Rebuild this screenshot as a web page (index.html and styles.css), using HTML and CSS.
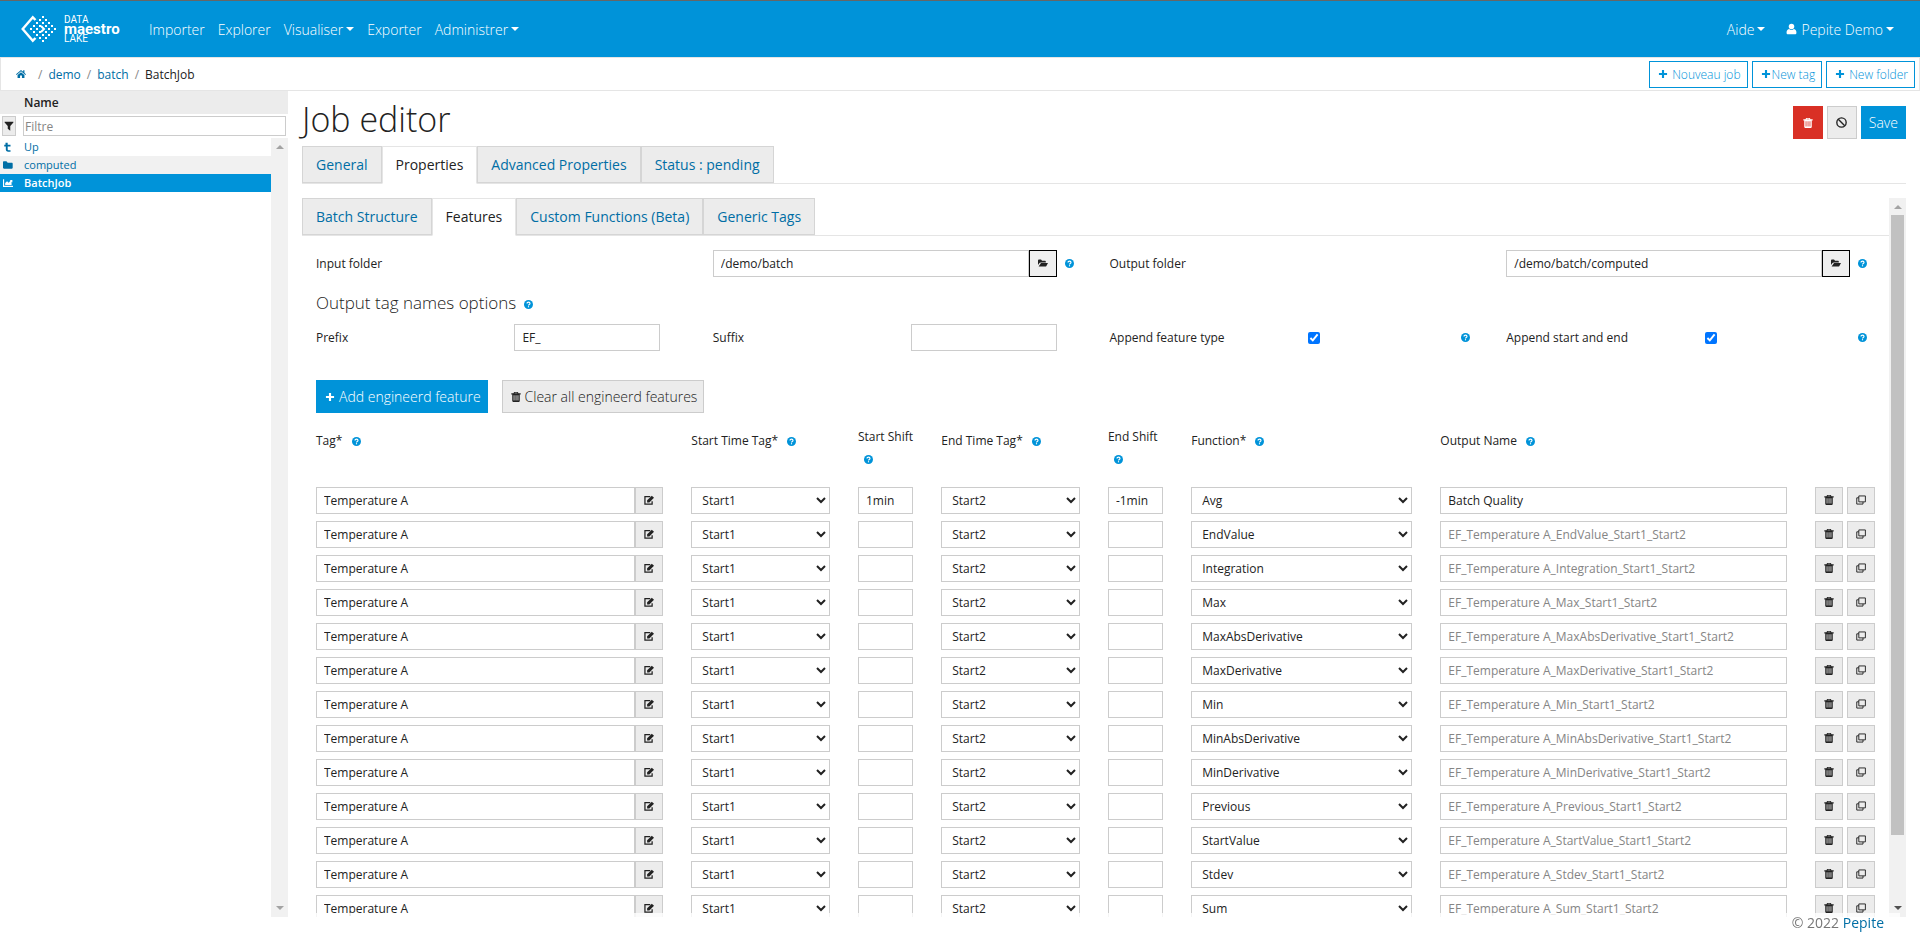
FILE: index.html
```html
<!DOCTYPE html>
<html lang="fr">
<head>
  <meta charset="UTF-8">
  <meta name="viewport" content="width=device-width, initial-scale=1.0">
  <title>Job editor</title>
  <link rel="stylesheet" href="styles.css">
</head>
<body>
  <!-- Icon set -->
  <svg class="icon-set" aria-hidden="true">
    <symbol id="i-help" viewBox="0 0 16 16"><circle cx="8" cy="8" r="8"/><path d="M5.4 6.2C5.4 4.6 6.500 3.800 8 3.800s2.700.9 2.700 2.300C10.700 7.900 8 7.900 8 9.700" fill="none" stroke="#fff" stroke-width="2"/><rect x="7" y="11" width="2" height="2" fill="#fff"/></symbol>
    <symbol id="i-home" viewBox="0 0 16 16"><path d="M8 1.500 0 8.400l1 1.200 7-6 7 6 1-1.200-2.500-2.200V2h-2v2.500zM8 5 2.500 9.700V14.500h4v-4h3v4h4V9.700z"/></symbol>
    <symbol id="i-plus" viewBox="0 0 16 16"><path d="M6.300 1.500h3.400v4.800h4.800v3.400H9.700v4.800H6.300V9.700H1.500V6.300h4.800z"/></symbol>
    <symbol id="i-user" viewBox="0 0 16 16"><circle cx="8" cy="4.500" r="4"/><path d="M4.500 8C2 8.500.8 10.500.8 13.300c0 1.500 1 2.200 2.200 2.200h10c1.200 0 2.200-.7 2.200-2.200 0-2.800-1.200-4.800-3.700-5.300-2 1.700-5 1.700-7 0z"/></symbol>
    <symbol id="i-filter" viewBox="0 0 16 16"><path d="M1 1h14v1.500L10 8v7.500L6 12.500V8L1 2.500z"/></symbol>
    <symbol id="i-up" viewBox="0 0 16 16"><path d="M4 1h3.500v3.500H12V7H7.500v4.500c0 1.300.8 1.600 1.800 1.600H12V15.500H8.500C5.500 15.500 4.500 14 4.500 12V7H2V4.500h2z"/></symbol>
    <symbol id="i-folder" viewBox="0 0 16 16"><path d="M0 3.500C0 2.700.7 2 1.500 2h4L7.500 4.500H14c.8 0 1.500.7 1.500 1.500v6.500c0 .8-.7 1.500-1.500 1.500H1.500C.7 14 0 13.300 0 12.500z"/></symbol>
    <symbol id="i-open" viewBox="0 0 16 16"><path d="M0 11V4c0-.8.6-1.500 1.400-1.500h3.400L6.500 4.500H11c.8 0 1.500.6 1.500 1.400V7H4.500C3.300 7 2.600 7.400 2 8.200zM4.800 8H16l-2.600 4.700c-.3.600-.8.800-1.400.8H1z"/></symbol>
    <symbol id="i-chart" viewBox="0 0 16 16"><path d="M0 2h1.800v10.500H16v1.800H0zM3.500 11.200V8l3-3 2.500 2.500 3-3L10.800 3H15v4.300l-1.300-1.200V11.200z"/></symbol>
    <symbol id="i-trash" viewBox="0 0 16 16"><path fill-rule="evenodd" d="M5 0h6l1 2h3.500v2H14v10.500c0 .8-.6 1.500-1.500 1.500h-9C2.600 16 2 15.300 2 14.500V4H.5V2H4zM6 1.300 5.700 2h4.600L10 1.300zM4.200 5v8.700h1.300V5zM7.400 5v8.700h1.300V5zM10.500 5v8.700h1.300V5z"/></symbol>
    <symbol id="i-ban" viewBox="0 0 16 16"><g fill="none" stroke="currentColor" stroke-width="2"><circle cx="8" cy="8" r="6.800"/><path d="m3.300 3.300 9.400 9.400"/></g></symbol>
    <symbol id="i-edit" viewBox="0 0 16 16"><path d="M10 2.500H1.500v12h11.500V10" fill="none" stroke="currentColor" stroke-width="2"/><path d="M5 12V8.500L12.500 1 16 4.500 8.500 12z"/></symbol>
    <symbol id="i-copy" viewBox="0 0 16 16"><g fill="none" stroke="currentColor" stroke-width="1.500"><path d="M4.500 1.500h10.500v9.500H4.500z"/><path d="M4.500 4.500H1.200v10h10V11"/></g></symbol>
  </svg>

  <!-- Main navigation -->
  <header class="navbar">
    <a class="brand" href="#" aria-label="Data maestro lake">
      <svg class="brand-mark" viewBox="0 0 40 28" aria-hidden="true">
        <path d="M14.500 5 11.800 2.300 1.700 14 11.800 25.700 14.500 23" fill="none" stroke="#fff" stroke-width="2.400"/>
        <path d="m20 11 3 3-3 3" fill="none" stroke="#fff" stroke-width="2"/>
        <g id="brandDots" fill="#fff"></g>
      </svg>
      <span class="brand-text">
        <span>DATA</span>
        <strong>maestro</strong>
        <span>LAKE</span>
      </span>
    </a>
    <nav class="nav">
      <a href="#">Importer</a>
      <a href="#">Explorer</a>
      <a href="#" class="dropdown">Visualiser</a>
      <a href="#">Exporter</a>
      <a href="#" class="dropdown">Administrer</a>
    </nav>
    <nav class="nav nav-right">
      <a href="#" class="dropdown">Aide</a>
      <a href="#" class="dropdown"><svg class="icon"><use href="#i-user"/></svg>Pepite Demo</a>
    </nav>
  </header>

  <!-- Breadcrumb and creation buttons -->
  <div class="toolbar">
    <nav class="breadcrumb" aria-label="Breadcrumb">
      <a href="#" aria-label="Home"><svg class="icon"><use href="#i-home"/></svg></a>
      <a href="#">demo</a>
      <a href="#">batch</a>
      <span>BatchJob</span>
    </nav>
    <div class="toolbar-actions">
      <button type="button" class="btn-outline"><svg class="icon"><use href="#i-plus"/></svg>Nouveau job</button>
      <button type="button" class="btn-outline btn-tight"><svg class="icon"><use href="#i-plus"/></svg>New tag</button>
      <button type="button" class="btn-outline"><svg class="icon"><use href="#i-plus"/></svg>New folder</button>
    </div>
  </div>

  <div class="page">
    <!-- Folder explorer -->
    <aside class="sidebar">
      <div class="sidebar-title">Name</div>
      <div class="sidebar-filter">
        <button type="button" aria-label="Filter"><svg class="icon"><use href="#i-filter"/></svg></button>
        <input type="text" placeholder="Filtre" aria-label="Filtre">
      </div>
      <div class="sidebar-body">
        <ul class="tree">
          <li><a href="#"><svg class="icon"><use href="#i-up"/></svg>Up</a></li>
          <li><a href="#"><svg class="icon"><use href="#i-folder"/></svg>computed</a></li>
          <li class="selected"><a href="#"><svg class="icon"><use href="#i-chart"/></svg>BatchJob</a></li>
        </ul>
        <div class="scrollbar disabled" aria-hidden="true"><i class="arrow-up"></i><i class="arrow-down"></i></div>
      </div>
    </aside>

    <!-- Job editor -->
    <main class="editor">
      <div class="editor-head">
        <h1>Job editor</h1>
        <div class="editor-actions">
          <button type="button" class="btn btn-danger" aria-label="Delete"><svg class="icon"><use href="#i-trash"/></svg></button>
          <button type="button" class="btn btn-light btn-icon" aria-label="Disable"><svg class="icon"><use href="#i-ban"/></svg></button>
          <button type="button" class="btn btn-primary btn-save">Save</button>
        </div>
      </div>
      <nav class="tabs">
        <a href="#">General</a>
        <a href="#" class="active">Properties</a>
        <a href="#">Advanced Properties</a>
        <a href="#">Status : pending</a>
      </nav>

      <div class="editor-body">
        <div class="editor-scroll">
          <nav class="tabs">
            <a href="#">Batch Structure</a>
            <a href="#" class="active">Features</a>
            <a href="#">Custom Functions (Beta)</a>
            <a href="#">Generic Tags</a>
          </nav>

          <div class="form-row folders">
            <label for="inputFolder">Input folder</label>
            <div class="field">
              <input type="text" id="inputFolder" value="/demo/batch"><button type="button" class="browse" aria-label="Browse"><svg class="icon"><use href="#i-open"/></svg></button>
              <svg class="help"><use href="#i-help"/></svg>
            </div>
            <label for="outputFolder">Output folder</label>
            <div class="field">
              <input type="text" id="outputFolder" value="/demo/batch/computed"><button type="button" class="browse" aria-label="Browse"><svg class="icon"><use href="#i-open"/></svg></button>
              <svg class="help"><use href="#i-help"/></svg>
            </div>
          </div>

          <h2>Output tag names options <svg class="help"><use href="#i-help"/></svg></h2>

          <div class="form-row options">
            <label for="prefix">Prefix</label>
            <div class="field no-help"><input type="text" id="prefix" value="EF_"></div>
            <label for="suffix">Suffix</label>
            <div class="field no-help"><input type="text" id="suffix"></div>
            <label for="appendType">Append feature type</label>
            <div class="field spread"><input type="checkbox" id="appendType" checked><svg class="help"><use href="#i-help"/></svg></div>
            <label for="appendStart">Append start and end</label>
            <div class="field spread"><input type="checkbox" id="appendStart" checked><svg class="help"><use href="#i-help"/></svg></div>
          </div>

          <div class="feature-actions">
            <button type="button" class="btn btn-primary"><svg class="icon"><use href="#i-plus"/></svg>Add engineerd feature</button>
            <button type="button" class="btn btn-light"><svg class="icon"><use href="#i-trash"/></svg>Clear all engineerd features</button>
          </div>

          <table class="features">
            <colgroup>
              <col class="col-tag"><col class="col-time"><col class="col-shift"><col class="col-time">
              <col class="col-shift"><col class="col-function"><col class="col-output"><col class="col-actions">
            </colgroup>
            <thead>
              <tr>
                <th>Tag* <svg class="help"><use href="#i-help"/></svg></th>
                <th>Start Time Tag* <svg class="help"><use href="#i-help"/></svg></th>
                <th class="stacked">Start Shift <svg class="help"><use href="#i-help"/></svg></th>
                <th>End Time Tag* <svg class="help"><use href="#i-help"/></svg></th>
                <th class="stacked">End Shift <svg class="help"><use href="#i-help"/></svg></th>
                <th>Function* <svg class="help"><use href="#i-help"/></svg></th>
                <th>Output Name <svg class="help"><use href="#i-help"/></svg></th>
                <th></th>
              </tr>
            </thead>
            <tbody id="featureRows"></tbody>
          </table>
        </div>
        <div class="scrollbar" aria-hidden="true"><i class="arrow-up"></i><div class="thumb"></div><i class="arrow-down"></i></div>
      </div>
    </main>
  </div>

  <footer class="footer">© 2022 <a href="#">Pepite</a></footer>

  <script>
    const functions = ['Avg', 'EndValue', 'Integration', 'Max', 'MaxAbsDerivative', 'MaxDerivative', 'Min',
      'MinAbsDerivative', 'MinDerivative', 'Previous', 'StartValue', 'Stdev', 'Sum'];

    // One table row per engineered feature
    const features = functions.map(name => ({ tag: 'Temperature A', fn: name, startShift: '', endShift: '', output: '' }));
    features[0].startShift = '1min';
    features[0].endShift = '-1min';
    features[0].output = 'Batch Quality';

    function options(list, selected) {
      return list.map(o => `<option${o === selected ? ' selected' : ''}>${o}</option>`).join('');
    }

    document.getElementById('featureRows').innerHTML = features.map(f => `
      <tr>
        <td><div class="group">
          <input type="text" aria-label="Tag" value="${f.tag}"><button type="button" class="btn-cell" aria-label="Edit tag"><svg class="icon"><use href="#i-edit"/></svg></button>
        </div></td>
        <td><select aria-label="Start Time Tag">${options(['Start1', 'Start2'], 'Start1')}</select></td>
        <td><input type="text" aria-label="Start Shift" value="${f.startShift}"></td>
        <td><select aria-label="End Time Tag">${options(['Start1', 'Start2'], 'Start2')}</select></td>
        <td><input type="text" aria-label="End Shift" value="${f.endShift}"></td>
        <td><select aria-label="Function">${options(functions, f.fn)}</select></td>
        <td><input type="text" aria-label="Output Name" value="${f.output}" placeholder="EF_${f.tag}_${f.fn}_Start1_Start2"></td>
        <td class="row-actions"><div class="group">
          <button type="button" class="btn-cell" aria-label="Delete"><svg class="icon"><use href="#i-trash"/></svg></button>
          <button type="button" class="btn-cell" aria-label="Duplicate"><svg class="icon"><use href="#i-copy"/></svg></button>
        </div></td>
      </tr>`).join('');

    // Dots of the logo, set out on a diagonal grid
    let dots = '';
    for (let a = 0; a < 5; a++) {
      for (let b = 0; b < 5; b++) {
        const x = 22 + (a - b) * 3;
        const y = 14 + (a + b - 4) * 3;
        if (Math.abs(x - 22) + Math.abs(y - 14) > 3) {
          dots += `<rect x="${x - 1}" y="${y - 1}" width="2" height="2"/>`;
        }
      }
    }
    document.getElementById('brandDots').innerHTML = dots;
  </script>
</body>
</html>
```
FILE: styles.css
```css
* {
  box-sizing: border-box;
}

body {
  margin: 0;
  height: 100vh;
  display: flex;
  flex-direction: column;
  overflow: hidden;
  font-family: "Open Sans", sans-serif;
  font-size: 12px;
  color: #222;
  background: #fff;
}

a {
  color: #006ea5;
  text-decoration: none;
}

button, input, select {
  font-family: inherit;
  font-size: inherit;
  color: inherit;
}

button {
  cursor: pointer;
}

.icon-set {
  display: none;
}

.icon {
  width: 10px;
  height: 10px;
  flex: none;
  fill: currentColor;
}

.help {
  width: 9px;
  height: 9px;
  flex: none;
  fill: #0093d9;
}

/* Navbar */
.navbar {
  display: flex;
  align-items: center;
  height: 57px;
  padding: 0 26px 0 21px;
  background: #0093d9;
  border-top: 1px solid #666;
}

.brand {
  display: flex;
  align-items: center;
  width: 127px;
  color: #fff;
}

.brand-mark {
  width: 40px;
  height: 28px;
}

.brand-text {
  display: flex;
  flex-direction: column;
  margin-left: 3px;
  font-family: Roboto, sans-serif;
  font-size: 10px;
  line-height: 10px;
}

.brand-text strong {
  font-size: 15px;
  line-height: 9px;
}

.nav {
  display: flex;
  gap: 12px;
  font-size: 14px;
  font-weight: 300;
}

.nav a {
  display: flex;
  align-items: center;
  padding: 0 0 0 1px;
  color: #fff;
}

.nav .icon {
  width: 11px;
  height: 12px;
  margin-right: 4px;
}

.nav-right {
  margin-left: auto;
  gap: 20px;
}

.dropdown::after {
  content: "";
  margin-left: 3px;
  border: 4px solid transparent;
  border-top-color: #fff;
  border-bottom: 0;
}

/* Breadcrumb bar */
.toolbar {
  display: flex;
  align-items: center;
  justify-content: space-between;
  height: 34px;
  padding: 0 4px 0 15px;
  border: 1px solid #e5e5e5;
}

.breadcrumb {
  display: flex;
  align-items: center;
}

.breadcrumb a, .breadcrumb span {
  display: flex;
  align-items: center;
}

.breadcrumb > * + *::before {
  content: "/";
  padding: 0 6px;
  color: #888;
}

.breadcrumb a:first-child {
  padding-right: 6px;
}

.toolbar-actions {
  display: flex;
  gap: 4px;
}

.btn-outline {
  display: flex;
  align-items: center;
  gap: 4px;
  height: 27px;
  padding: 0 6px 0 8px;
  border: 1px solid #0093d9;
  background: #fff;
  color: #0093d9;
  font-weight: 300;
}

.btn-tight {
  gap: 1px;
}

/* Page */
.page {
  display: flex;
  flex: 1;
  min-height: 0;
  padding-bottom: 21px;
}

.sidebar {
  display: flex;
  flex-direction: column;
  width: 15%;
}

.sidebar-title {
  padding-left: 24px;
  background: #ececec;
  font-weight: 600;
  line-height: 23px;
}

.sidebar-filter {
  display: flex;
  gap: 7px;
  padding: 2px 2px;
}

.sidebar-filter button {
  width: 14px;
  height: 20px;
  padding: 0 1px;
  border: 1px solid #ccc;
  background: #ececec;
}

.sidebar-filter input {
  flex: 1;
  min-width: 0;
  height: 20px;
  padding: 0 1px;
  border: 1px solid #ccc;
}

.sidebar-body {
  display: flex;
  flex: 1;
}

.tree {
  flex: 1;
  margin: 0;
  padding: 0;
  list-style: none;
  font-size: 11px;
}

.tree a {
  display: flex;
  align-items: center;
  gap: 11px;
  padding-left: 3px;
  line-height: 18px;
}

.tree li:nth-child(even) {
  background: #f1f1f1;
}

.tree .selected {
  background: #0093d9;
  font-weight: 600;
}

.tree .selected a {
  color: #fff;
}

/* Scrollbars */
.scrollbar {
  display: flex;
  flex-direction: column;
  align-items: center;
  justify-content: space-between;
  width: 17px;
  padding: 7px 2px;
  background: #f1f1f1;
}

.arrow-up, .arrow-down {
  border: 4px solid transparent;
}

.arrow-up {
  border-top: 0;
  border-bottom-color: #a3a3a3;
}

.arrow-down {
  border-bottom: 0;
  border-top-color: #505050;
}

.disabled .arrow-down {
  border-top-color: #a3a3a3;
}

.thumb {
  width: 100%;
  height: 88%;
  margin: 6px 0 auto;
  background: #c1c1c1;
}

/* Editor */
.editor {
  display: flex;
  flex: 1;
  flex-direction: column;
  min-width: 0;
  padding: 0 14px;
}

.editor-head {
  display: flex;
  align-items: flex-start;
  justify-content: space-between;
  height: 55px;
}

h1 {
  margin: 5px 0 0;
  font-size: 34px;
  font-weight: 300;
  line-height: 46px;
}

.editor-actions {
  display: flex;
  gap: 4px;
  padding-top: 15px;
}

.btn {
  display: flex;
  align-items: center;
  gap: 4px;
  height: 33px;
  padding: 0 6px 0 8px;
  border: 1px solid transparent;
  font-size: 14px;
  font-weight: 300;
}

.btn-primary {
  background: #0093d9;
  color: #fff;
}

.btn-light {
  border-color: #ccc;
  background: #ececec;
}

.btn-danger {
  background: #d93025;
  color: #fff;
}

.btn-danger, .btn-icon {
  justify-content: center;
  width: 30px;
  padding: 0;
}

.btn-icon .icon {
  width: 11px;
  height: 11px;
}

.btn-save {
  padding: 0 7px;
}

.tabs {
  display: flex;
  border-bottom: 1px solid #e5e5e5;
}

.tabs a {
  padding: 0 13px;
  border: 1px solid #d5d5d5;
  background: #ececec;
  font-size: 14px;
  line-height: 35px;
}

.tabs .active {
  border-color: #e5e5e5;
  border-bottom-color: #fff;
  background: #fff;
  color: #222;
  margin-bottom: -1px;
}

.editor-body {
  display: flex;
  flex: 1;
  min-height: 0;
  margin-top: 14px;
}

.editor-scroll {
  flex: 1;
  min-width: 0;
  overflow: hidden;
}

/* Forms */
.form-row {
  display: grid;
}

.form-row > * {
  margin: 0 14px;
}

.folders {
  grid-template-columns: repeat(4, 1fr);
  padding-top: 14px;
}

.options {
  grid-template-columns: repeat(8, 1fr);
}

.form-row label {
  line-height: 27px;
}

.field {
  display: flex;
  align-items: center;
}

input[type="text"], select {
  border: 1px solid #ccc;
  border-radius: 0;
  background: #fff;
}

.field input[type="text"], .features input {
  flex: 1;
  width: 100%;
  min-width: 0;
  height: 27px;
  padding: 0 7px;
}

.folders .help {
  margin: 0 8px;
}

.no-help {
  padding-right: 25px;
}

.spread {
  justify-content: space-between;
  padding-right: 8px;
}

.field input[type="checkbox"] {
  width: 12px;
  height: 12px;
  margin: 0;
}

::placeholder {
  color: #858585;
}

.browse {
  width: 28px;
  height: 27px;
  padding: 0;
  border: 1px solid #000;
  background: #efefef;
}

h2 {
  margin: 13px 14px 9px;
  font-size: 17px;
  font-weight: 300;
  line-height: 25px;
}

h2 .help {
  margin-left: 3px;
}

.feature-actions {
  display: flex;
  gap: 14px;
  padding: 29px 14px 13px;
}

/* Features table */
.features {
  width: 100%;
  table-layout: fixed;
  border-collapse: collapse;
}

.col-tag {
  width: 23.65%;
}

.col-output {
  width: 23.6%;
}

.col-time {
  width: 10.5%;
}

.col-shift {
  width: 5.25%;
}

.col-function {
  width: 15.7%;
}

.features th {
  height: 57px;
  padding: 3px 14px 0;
  font-weight: 400;
  line-height: 23px;
  text-align: left;
  vertical-align: top;
}

.features th .help {
  margin-left: 6px;
  vertical-align: -1px;
}

.features .stacked {
  padding-top: 0;
  padding-right: 8px;
  line-height: 22px;
}

.features td {
  height: 34px;
  padding: 0 14px;
}

.features select {
  width: 100%;
  height: 27px;
  padding: 0 6px;
}

.group {
  display: flex;
}

.btn-cell {
  flex: none;
  width: 28px;
  height: 27px;
  padding: 0;
  border: 1px solid #ccc;
  background: #ececec;
}

.features .row-actions {
  padding-right: 0;
}

.row-actions .group {
  gap: 4px;
}

/* Footer */
.footer {
  position: fixed;
  right: 0;
  bottom: 0;
  left: 15%;
  height: 25px;
  margin-right: 20px;
  padding-right: 16px;
  background: rgba(255, 255, 255, 0.8);
  color: #777;
  font-size: 14px;
  line-height: 20px;
  text-align: right;
}
```
